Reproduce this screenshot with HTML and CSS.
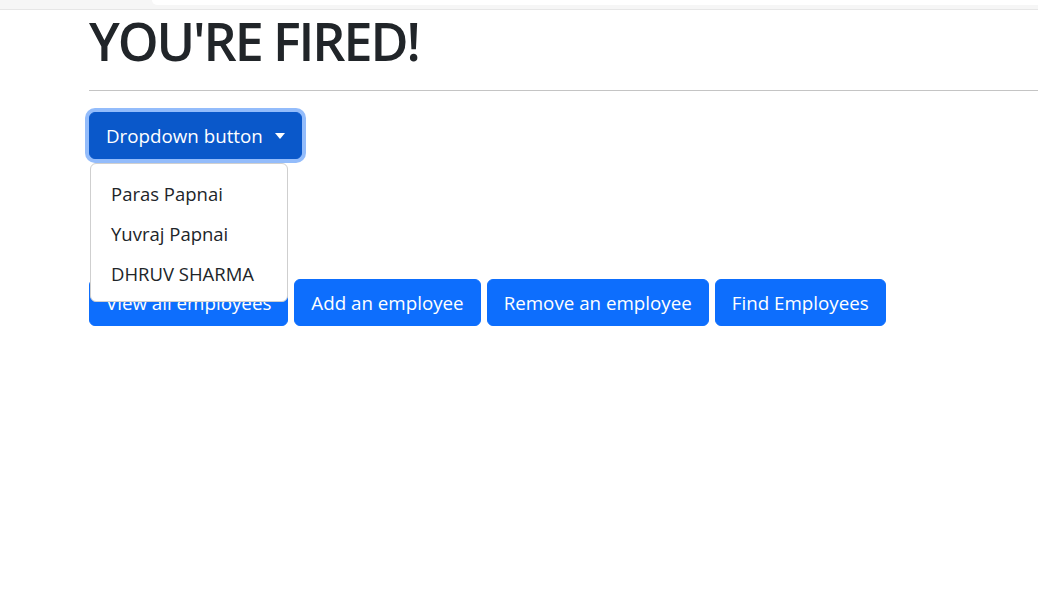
FILE: index.html
```html
<!DOCTYPE html>
<html lang="en">
<head>
<meta charset="utf-8">
<title>You're fired</title>
<link rel="stylesheet" href="styles.css">
</head>
<body>
<div class="chrome"><div class="chrome-omnibox"></div></div>
<main class="page">
  <h1 class="title">YOU'RE FIRED!</h1>
  <hr class="rule">
  <div class="dropdown">
    <button class="btn btn-active" type="button">Dropdown button<span class="caret"></span></button>
    <ul class="menu">
      <li class="menu-item">Paras Papnai</li>
      <li class="menu-item">Yuvraj Papnai</li>
      <li class="menu-item">DHRUV SHARMA</li>
    </ul>
  </div>
  <div class="actions">
    <button class="btn" type="button">View all employees</button>
    <button class="btn" type="button">Add an employee</button>
    <button class="btn" type="button">Remove an employee</button>
    <button class="btn" type="button">Find Employees</button>
  </div>
</main>
</body>
</html>
```
FILE: styles.css
```css
* { box-sizing: border-box; }
html, body { margin: 0; padding: 0; background: #fff; }
body {
  font-family: "Open Sans", "Noto Sans", sans-serif;
  color: #212529;
  overflow: hidden;
}
.chrome {
  height: 10px;
  background: #f6f6f6;
  border-bottom: 1px solid #e6e6e6;
  display: flex;
  justify-content: flex-end;
}
.chrome-omnibox {
  width: 886px;
  height: 5px;
  background: #fff;
  border-bottom-left-radius: 10px;
}
.page {
  padding-left: 89px;
}
.title {
  margin: 0;
  font-size: 52px;
  font-weight: 600;
  line-height: 62px;
  letter-spacing: -2.1px;
  color: #212529;
}
.rule {
  margin: 18px 0 0 0;
  border: 0;
  border-top: 1px solid #c4c4c4;
  height: 0;
}
.dropdown {
  position: relative;
  margin-top: 21px;
  display: inline-block;
}
.btn {
  display: inline-flex;
  align-items: center;
  height: 47px;
  padding: 0 16px;
  border: 1px solid #0d6efd;
  border-radius: 6px;
  background: #0d6efd;
  color: #fff;
  font-family: inherit;
  font-size: 18.75px;
  line-height: 28px;
  cursor: pointer;
}
.btn-active {
  background: #0a58ca;
  border-color: #0a58ca;
  box-shadow: 0 0 0 4px #93bcfb;
}
.caret {
  display: inline-block;
  margin-left: 12px;
  border-top: 6px solid #fff;
  border-left: 5px solid transparent;
  border-right: 5px solid transparent;
}
.menu {
  position: absolute;
  top: 51px;
  left: 1px;
  width: 198px;
  margin: 0;
  padding: 9px 0 8px;
  list-style: none;
  background: #fff;
  border: 1px solid #cfcfcf;
  border-radius: 6px;
  z-index: 10;
}
.menu-item {
  height: 40px;
  padding: 0 20px;
  display: flex;
  align-items: center;
  font-size: 18.5px;
  color: #212529;
}
.actions {
  display: flex;
  gap: 6px;
  margin-top: 120px;
}
```
